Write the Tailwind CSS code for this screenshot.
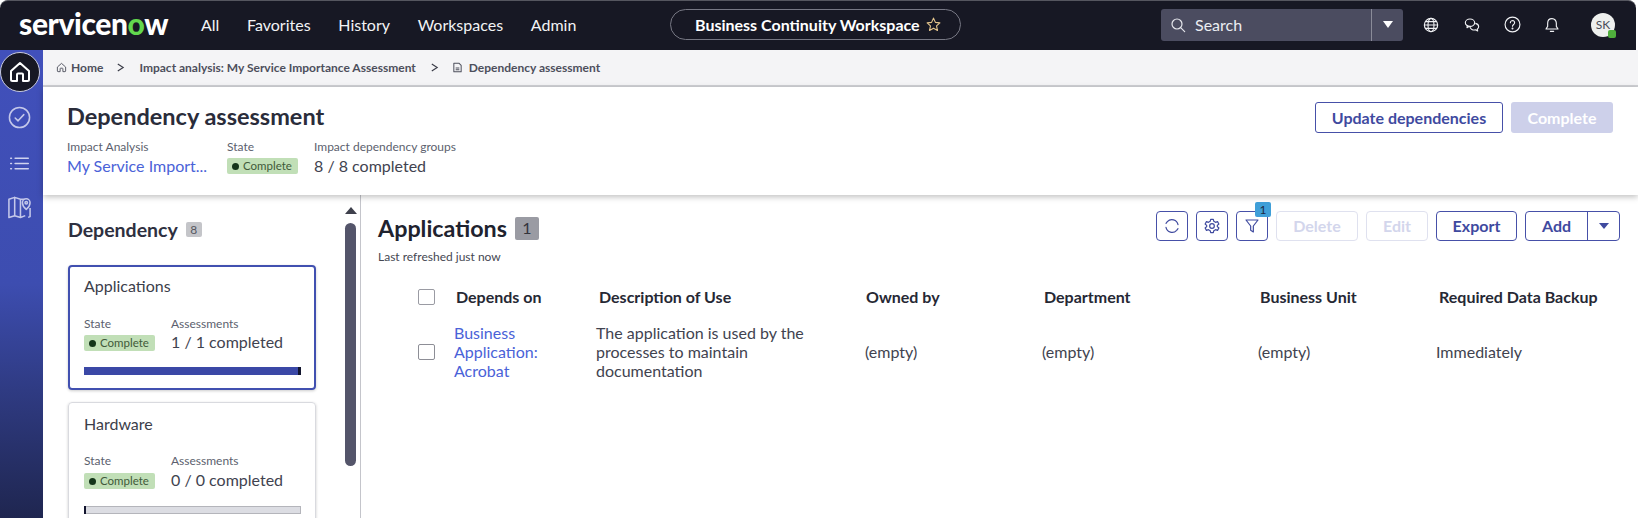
<!DOCTYPE html>
<html lang="en">
<head>
<meta charset="utf-8">
<script src="https://cdn.jsdelivr.net/npm/@tailwindcss/browser@4"></script>
<title>Dependency assessment</title>
</head>
<body class="bg-white">
<div class="w-[1638px] h-[518px] overflow-hidden flex flex-col bg-white [font-family:Lato,sans-serif] text-[#2e3040]">
  <header class="h-[50px] shrink-0 w-[1636px] bg-[#171824] border-t border-[#55565f] rounded-t-[8px] flex items-center pl-[19px] pb-[2px] text-white">
    <div class="w-[651px] flex items-center">
      <span class="w-[148px] text-[30px] leading-none font-black tracking-[-0.4px] pb-[3px] whitespace-nowrap">servicen<span class="text-[#62d84e]">o</span>w</span>
      <nav class="ml-[34px] flex items-center gap-[27.7px] text-[16px] text-[#f2f3f5]">
        <span>All</span><span>Favorites</span><span>History</span><span>Workspaces</span><span>Admin</span>
      </nav>
    </div>
    <div class="w-[291px] h-[31px] rounded-full border border-[#777884] flex items-center pl-[24px] gap-[5px] text-[16px] font-bold whitespace-nowrap">
      <span>Business Continuity Workspace</span>
      <svg class="w-[17px] h-[17px]" viewBox="0 0 24 24" fill="none" stroke="#e3c48c" stroke-width="1.6" stroke-linejoin="round"><path d="M12 3l2.7 6 6.3.7-4.7 4.3 1.3 6.5L12 17.2 6.4 20.5 7.7 14 3 9.7 9.3 9z"/></svg>
    </div>
    <div class="ml-[200px] w-[242px] h-[32px] rounded-[3px] bg-[#4b4c60] flex items-center">
      <div class="w-[210px] flex items-center pl-[9px] gap-[9px] text-[16px] text-[#eceef2]">
        <svg class="w-[16px] h-[16px]" viewBox="0 0 24 24" fill="none" stroke="#e6e7ec" stroke-width="1.8" stroke-linecap="round"><circle cx="10.5" cy="10.5" r="7.5"/><path d="M16 16l6 6"/></svg>
        <span>Search</span>
      </div>
      <div class="flex-1 h-full border-l border-[#8a8b98] flex items-center justify-center">
        <span class="w-0 h-0 border-x-[5px] border-x-transparent border-t-[7px] border-t-white"></span>
      </div>
    </div>
    <div class="ml-[20px] flex items-center gap-[24px]">
      <svg class="w-[16px] h-[16px]" viewBox="0 0 24 24" fill="none" stroke="#f1f2f5" stroke-width="1.7"><circle cx="12" cy="12" r="10"/><ellipse cx="12" cy="12" rx="4.5" ry="10"/><path d="M2 12h20M3.5 7h17M3.5 17h17"/></svg>
      <svg class="w-[16px] h-[16px] ml-[1px]" viewBox="0 0 24 24" fill="none" stroke="#f1f2f5" stroke-width="1.7" stroke-linejoin="round"><ellipse cx="9" cy="8.500" rx="7" ry="5.500"/><path d="M5 12.500L4.500 16 8 14"/><path d="M17 9.500c3 .6 5 2.700 5 5 0 1.500-.9 2.800-2.200 3.700l.7 2.800-3.300-1.700c-3.800.8-7.700-1-8.500-4.800"/></svg>
      <svg class="w-[17px] h-[17px]" viewBox="0 0 24 24" fill="none" stroke="#f1f2f5" stroke-width="1.6" stroke-linecap="round"><circle cx="12" cy="12" r="10.500"/><path d="M9 9.500a3 3 0 1 1 4.600 2.500c-1 .7-1.600 1.300-1.600 2.500"/><circle cx="12" cy="17.500" r=".6"/></svg>
      <svg class="w-[16px] h-[16px] -ml-[1px]" viewBox="0 0 24 24" fill="none" stroke="#f1f2f5" stroke-width="1.7" stroke-linejoin="round"><path d="M12 2.500c-4 0-6.500 3-6.500 7v4.500L3 18h18l-2.500-4V9.500c0-4-2.500-7-6.500-7z"/><path d="M9.500 21.500h5" stroke-linecap="round"/></svg>
      <div class="relative ml-[7px] w-[24px] h-[24px] rounded-full bg-[#eef0ee] text-[#4a4c58] text-[12px] flex items-center justify-center">SK
        <span class="absolute right-[-1px] bottom-[-1px] w-[8px] h-[8px] rounded-[2px] bg-[#4fae3c]"></span>
      </div>
    </div>
  </header>

  <div class="flex-1 flex min-h-0">
    <aside class="w-[43px] shrink-0 bg-gradient-to-b from-[#4150bb] via-[#3d4db0] to-[#1f2650] flex flex-col items-center pt-[2px]">
      <div class="w-[40px] h-[40px] rounded-full bg-[#171824] border border-[#c9cbe0] flex items-center justify-center -ml-[4px]">
        <svg class="w-[24px] h-[24px]" viewBox="0 0 24 24" fill="none" stroke="#fff" stroke-width="2" stroke-linejoin="round"><path d="M3 11l9-8 9 8v8.500a1.500 1.500 0 0 1-1.500 1.500H15v-6.500a1 1 0 0 0-1-1h-4a1 1 0 0 0-1 1V21H4.500A1.500 1.500 0 0 1 3 19.500z"/></svg>
      </div>
      <svg class="mt-[14px] -ml-[5px] w-[23px] h-[23px]" viewBox="0 0 24 24" fill="none" stroke="#c4c8ea" stroke-width="1.600" stroke-linecap="round" stroke-linejoin="round"><circle cx="12" cy="12" r="10.500"/><path d="M7.500 12.500l3 3 6-6.500"/></svg>
      <svg class="mt-[24px] -ml-[5px] w-[21px] h-[21px]" viewBox="0 0 24 24" fill="none" stroke="#d0d3ef" stroke-width="1.800" stroke-linecap="round"><path d="M7 6h15M7 12h15M7 18h15M2 6h.8M2 12h.8M2 18h.8"/></svg>
      <svg class="mt-[21px] -ml-[4px] w-[25px] h-[24px]" viewBox="0 0 26 24" fill="none" stroke="#c4c8ea" stroke-width="1.600" stroke-linejoin="round"><path d="M2 4l6-2v19l-6 2zM8 2l6 2v19l-6-2zM14 4h4M14 23l5-2M24 13v9l-2 .8"/><path d="M20 14.500s-4-3.500-4-7a4 4 0 0 1 8 0c0 3.500-4 7-4 7z"/><circle cx="20" cy="7.500" r="1.300"/></svg>
    </aside>

    <main class="flex-1 min-w-0 flex flex-col">
      <div class="h-[37px] shrink-0 bg-[#f4f4f6] border-b-2 border-[#cfd0d4] flex items-center pl-[13px] text-[12px] font-bold text-[#4d4f5c] whitespace-nowrap">
        <svg class="w-[11px] h-[11px] mr-[4px]" viewBox="0 0 24 24" fill="none" stroke="#4d4f5c" stroke-width="2" stroke-linejoin="round"><path d="M3 11l9-8 9 8v8.500a1.500 1.500 0 0 1-1.500 1.500H15v-6.500a1 1 0 0 0-1-1h-4a1 1 0 0 0-1 1V21H4.500A1.500 1.500 0 0 1 3 19.500z"/></svg>
        <span>Home</span>
        <svg class="ml-[13px] mr-[14px] w-[9px] h-[9px]" viewBox="0 0 10 10" fill="none" stroke="#3a3c48" stroke-width="1.300"><path d="M2 1l6 4-6 4"/></svg>
        <span>Impact analysis: My Service Importance Assessment</span>
        <svg class="ml-[14px] mr-[13px] w-[9px] h-[9px]" viewBox="0 0 10 10" fill="none" stroke="#3a3c48" stroke-width="1.300"><path d="M2 1l6 4-6 4"/></svg>
        <svg class="w-[11px] h-[11px] mr-[6px]" viewBox="0 0 24 24" fill="none" stroke="#4d4f5c" stroke-width="2.200" stroke-linejoin="round"><path d="M4 2.500h11l5 5v14H4zM8 13h8M8 17h8"/></svg>
        <span>Dependency assessment</span>
      </div>

      <section class="h-[108px] shrink-0 relative z-10 bg-white shadow-[0_2px_6px_rgba(0,0,0,0.25)] flex justify-between pl-[24px] pr-[25px]">
        <div class="pt-[13px]">
          <h1 class="text-[23.5px] leading-[32px] font-bold text-[#2a2c3a]">Dependency assessment</h1>
          <div class="mt-[7px] flex">
            <div class="w-[160px]">
              <div class="text-[12px] leading-[15px] text-[#5c5f6e]">Impact Analysis</div>
              <div class="mt-[2px] text-[16px] leading-[20px] text-[#4a62d8]">My Service Import...</div>
            </div>
            <div class="w-[87px]">
              <div class="text-[12px] leading-[15px] text-[#5c5f6e]">State</div>
              <div class="mt-[4px] h-[16px] w-[71px] rounded-[2px] bg-[#c1dfb7] flex items-center pl-[5px] gap-[4px] text-[11.5px] text-[#3f5a3a]"><span class="w-[7px] h-[7px] rounded-full bg-[#14351a]"></span>Complete</div>
            </div>
            <div>
              <div class="text-[12px] leading-[15px] text-[#5c5f6e]">Impact dependency groups</div>
              <div class="mt-[2px] text-[16px] leading-[20px] text-[#41434f]">8 / 8 completed</div>
            </div>
          </div>
        </div>
        <div class="pt-[15px] flex gap-[8px] text-[16px] font-bold">
          <button class="w-[188px] h-[31px] rounded-[3px] border border-[#4650a8] text-[#3f4a9f]">Update dependencies</button>
          <button class="w-[102px] h-[31px] rounded-[3px] bg-[#cdd0ea] text-white">Complete</button>
        </div>
      </section>

      <div class="flex-1 min-h-0 flex overflow-hidden">
        <div class="w-[318px] shrink-0 border-r border-[#c4c5cb] flex pl-[25px] overflow-hidden">
          <div class="w-[248px] shrink-0">
            <div class="pt-[16px] flex items-center h-[70px] pb-[17px]">
              <h2 class="text-[19.5px] font-bold text-[#2e3040]">Dependency</h2>
              <span class="ml-[8px] w-[16px] h-[15px] rounded-[2px] bg-[#c4c5c9] text-[12px] text-[#55575f] flex items-center justify-center">8</span>
            </div>
            <div class="h-[125px] rounded-[4px] border-2 border-[#4150b0] shadow-[0_1px_3px_rgba(0,0,0,0.2)] px-[14px] pt-[9px]">
              <div class="text-[16px] leading-[20px] text-[#3c3e4a]">Applications</div>
              <div class="mt-[20px] flex">
                <div class="w-[87px]">
                  <div class="text-[12px] leading-[15px] text-[#5c5f6e]">State</div>
                  <div class="mt-[4px] h-[16px] w-[71px] rounded-[2px] bg-[#c1dfb7] flex items-center pl-[5px] gap-[4px] text-[11.5px] text-[#3f5a3a]"><span class="w-[7px] h-[7px] rounded-full bg-[#14351a]"></span>Complete</div>
                </div>
                <div>
                  <div class="text-[12px] leading-[15px] text-[#5c5f6e]">Assessments</div>
                  <div class="mt-[1px] text-[16px] leading-[20px] text-[#41434f]">1 / 1 completed</div>
                </div>
              </div>
              <div class="mt-[15px] w-[217px] h-[8px] bg-[#3b48a6] flex justify-end"><span class="w-[3px] h-full bg-[#12152e]"></span></div>
            </div>
            <div class="mt-[12px] h-[140px] rounded-[4px] border border-[#d9dadf] shadow-[0_1px_3px_rgba(0,0,0,0.2)] px-[15px] pt-[11px]">
              <div class="text-[16px] leading-[20px] text-[#3c3e4a]">Hardware</div>
              <div class="mt-[19px] flex">
                <div class="w-[87px]">
                  <div class="text-[12px] leading-[15px] text-[#5c5f6e]">State</div>
                  <div class="mt-[5px] h-[16px] w-[71px] rounded-[2px] bg-[#c1dfb7] flex items-center pl-[5px] gap-[4px] text-[11.5px] text-[#3f5a3a]"><span class="w-[7px] h-[7px] rounded-full bg-[#14351a]"></span>Complete</div>
                </div>
                <div>
                  <div class="text-[12px] leading-[15px] text-[#5c5f6e]">Assessments</div>
                  <div class="mt-[2px] text-[16px] leading-[20px] text-[#41434f]">0 / 0 completed</div>
                </div>
              </div>
              <div class="mt-[16px] w-[217px] h-[8px] bg-[#dcdde3] border border-[#b4b5bb] flex"><span class="w-[2px] -my-[1px] -ml-[1px] h-[8px] bg-[#12152e]"></span></div>
            </div>
          </div>
          <div class="ml-[29px] w-[11px] pt-[12px] flex flex-col items-center">
            <span class="w-0 h-0 border-x-[6px] border-x-transparent border-b-[7px] border-b-[#3e404c]"></span>
            <span class="mt-[9px] w-[11px] h-[243px] rounded-full bg-[#54556a]"></span>
          </div>
        </div>

        <div class="flex-1 min-w-0 pl-[17px]">
          <div class="flex justify-between pr-[18px] h-[78px]">
            <div class="pt-[16px]">
              <div class="flex items-center">
                <h2 class="text-[23.3px] leading-[34px] font-bold text-[#20222e]">Applications</h2>
                <span class="ml-[8px] w-[24px] h-[23px] rounded-[2px] bg-[#9a9ba3] text-[16px] text-[#33343c] flex items-center justify-center">1</span>
              </div>
              <div class="mt-[4px] text-[12px] leading-[16px] text-[#454752]">Last refreshed just now</div>
            </div>
            <div class="pt-[16px] flex gap-[8px] text-[16px] font-bold text-[#3f4a9f]">
              <button class="w-[32px] h-[30px] rounded-[4px] border border-[#4650a8] flex items-center justify-center">
                <svg class="w-[16px] h-[16px]" viewBox="0 0 24 24" fill="none" stroke="#3f4a9f" stroke-width="1.800" stroke-linecap="round"><path d="M21 10a9.300 9.300 0 0 0-16-4.500L3 8M3 14a9.300 9.300 0 0 0 16 4.500l2-2.500"/></svg>
              </button>
              <button class="w-[32px] h-[30px] rounded-[4px] border border-[#4650a8] flex items-center justify-center">
                <svg class="w-[16px] h-[16px]" viewBox="0 0 24 24" fill="none" stroke="#3f4a9f" stroke-width="1.800" stroke-linejoin="round"><path d="M10 2h4l.7 3 2.600 1.500 3-1 2 3.500-2.300 2v2l2.300 2-2 3.500-3-1-2.600 1.500-.7 3h-4l-.7-3-2.600-1.500-3 1-2-3.500 2.300-2v-2L1.700 9l2-3.500 3 1L9.300 5z"/><circle cx="12" cy="12" r="3.500"/></svg>
              </button>
              <button class="relative w-[32px] h-[30px] rounded-[4px] border border-[#4650a8] flex items-center justify-center">
                <svg class="w-[16px] h-[16px]" viewBox="0 0 24 24" fill="none" stroke="#3f4a9f" stroke-width="1.800" stroke-linejoin="round"><path d="M3 3h18l-7 9v9l-4-2.500V12z"/></svg>
                <span class="absolute left-[18px] top-[-10px] w-[16px] h-[15px] rounded-[2px] bg-[#3f9fd8] text-[12px] leading-[15px] font-normal text-[#1d2a44]">1</span>
              </button>
              <button class="w-[82px] h-[30px] rounded-[4px] border border-[#dfe1ef] text-[#d3d6ec]">Delete</button>
              <button class="w-[62px] h-[30px] rounded-[4px] border border-[#dfe1ef] text-[#d3d6ec]">Edit</button>
              <button class="w-[81px] h-[30px] rounded-[4px] border border-[#4650a8]">Export</button>
              <div class="w-[95px] h-[30px] rounded-[4px] border border-[#4650a8] flex">
                <span class="w-[62px] flex items-center justify-center border-r border-[#4650a8]">Add</span>
                <span class="flex-1 flex items-center justify-center"><span class="w-0 h-0 border-x-[5px] border-x-transparent border-t-[6px] border-t-[#3f4a9f]"></span></span>
              </div>
            </div>
          </div>
          <div class="pl-[40px]">
            <div class="grid grid-cols-[38px_143px_267px_178px_216px_179px_1fr] items-center h-[48px] text-[16px] font-bold text-[#262834] whitespace-nowrap">
              <span class="w-[17px] h-[16px] rounded-[2px] border border-[#9a9ba3]"></span>
              <span>Depends on</span><span>Description of Use</span><span>Owned by</span><span>Department</span><span>Business Unit</span><span>Required Data Backup</span>
            </div>
            <div class="mt-[2px] grid grid-cols-[36px_142px_269px_177px_216px_178px_1fr] items-center text-[16px] leading-[19px] text-[#41434f]">
              <span class="w-[17px] h-[16px] rounded-[2px] border border-[#8d8e96]"></span>
              <span class="w-[90px] text-[#4a62d8]">Business Application: Acrobat</span>
              <span class="w-[225px]">The application is used by the processes to maintain documentation</span>
              <span>(empty)</span><span>(empty)</span><span>(empty)</span><span>Immediately</span>
            </div>
          </div>
        </div>
      </div>
    </main>
  </div>
</div>
</body>
</html>
